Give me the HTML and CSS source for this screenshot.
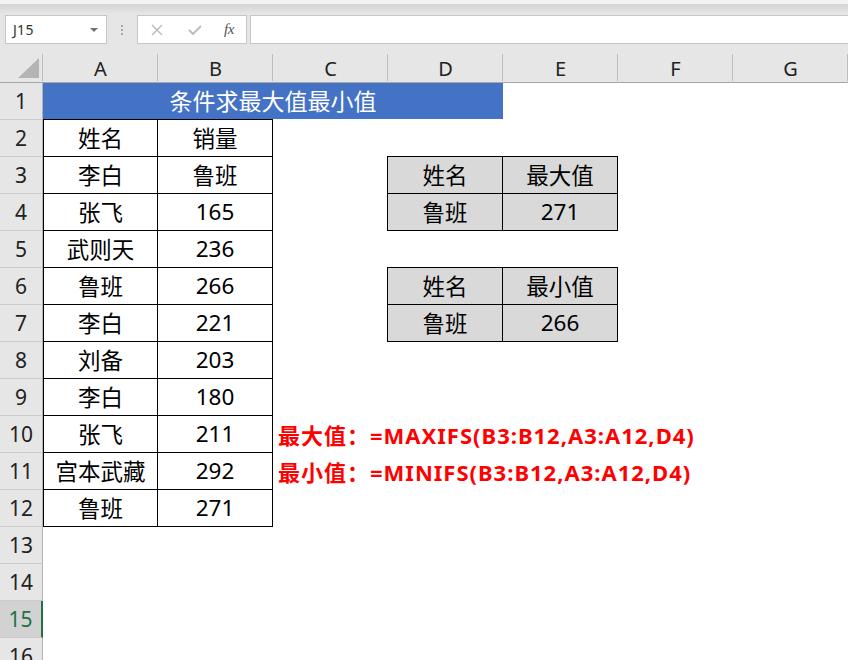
FILE: index.html
```html
<!DOCTYPE html>
<html lang="zh">
<head>
<meta charset="utf-8">
<title>条件求最大值最小值</title>
<link rel="stylesheet" href="styles.css">
</head>
<body>
<div class="topstrip"></div>
<div class="fbar">
  <div class="namebox"><span class="nbtext">J15</span><svg class="dd" width="8" height="5" viewBox="0 0 8 5"><polygon points="0,0 8,0 4,4" fill="#707070"/></svg></div>
  <div class="grip"><i></i><i></i><i></i></div>
  <div class="fbtns">
    <svg width="12" height="12" viewBox="0 0 12 12"><path d="M1 1 L11 11 M11 1 L1 11" stroke="#b9b9b9" stroke-width="1.4" fill="none"/></svg>
    <svg width="14" height="10" viewBox="0 0 14 10"><path d="M1 5 L5 9 L13 1" stroke="#b9b9b9" stroke-width="1.8" fill="none"/></svg>
    <span class="fx">fx</span>
  </div>
  <div class="finput"></div>
</div>
<div class="sheet">
  <div class="corner"><svg width="43" height="38" viewBox="0 0 43 38"><polygon points="18,34 39,34 39,14" fill="#b4b4b4"/></svg></div>
  <div class="ch">A</div><div class="ch">B</div><div class="ch">C</div><div class="ch">D</div><div class="ch">E</div><div class="ch">F</div><div class="ch">G</div>

  <div class="rh">1</div><div class="c title">条件求最大值最小值</div><div class="c"></div><div class="c"></div><div class="c"></div>
  <div class="rh">2</div><div class="c t ta tt">姓名</div><div class="c t tt">销量</div><div class="c"></div><div class="c"></div><div class="c"></div><div class="c"></div><div class="c"></div>
  <div class="rh">3</div><div class="c t ta">李白</div><div class="c t">鲁班</div><div class="c"></div><div class="c t g tlt">姓名</div><div class="c t g tt">最大值</div><div class="c"></div><div class="c"></div>
  <div class="rh">4</div><div class="c t ta">张飞</div><div class="c t">165</div><div class="c"></div><div class="c t g tl">鲁班</div><div class="c t g">271</div><div class="c"></div><div class="c"></div>
  <div class="rh">5</div><div class="c t ta">武则天</div><div class="c t">236</div><div class="c"></div><div class="c"></div><div class="c"></div><div class="c"></div><div class="c"></div>
  <div class="rh">6</div><div class="c t ta">鲁班</div><div class="c t">266</div><div class="c"></div><div class="c t g tlt">姓名</div><div class="c t g tt">最小值</div><div class="c"></div><div class="c"></div>
  <div class="rh">7</div><div class="c t ta">李白</div><div class="c t">221</div><div class="c"></div><div class="c t g tl">鲁班</div><div class="c t g">266</div><div class="c"></div><div class="c"></div>
  <div class="rh">8</div><div class="c t ta">刘备</div><div class="c t">203</div><div class="c"></div><div class="c"></div><div class="c"></div><div class="c"></div><div class="c"></div>
  <div class="rh">9</div><div class="c t ta">李白</div><div class="c t">180</div><div class="c"></div><div class="c"></div><div class="c"></div><div class="c"></div><div class="c"></div>
  <div class="rh">10</div><div class="c t ta">张飞</div><div class="c t">211</div><div class="c red">最大值：=MAXIFS(B3:B12,A3:A12,D4)</div>
  <div class="rh">11</div><div class="c t ta">宫本武藏</div><div class="c t">292</div><div class="c red">最小值：=MINIFS(B3:B12,A3:A12,D4)</div>
  <div class="rh">12</div><div class="c t ta">鲁班</div><div class="c t">271</div><div class="c"></div><div class="c"></div><div class="c"></div><div class="c"></div><div class="c"></div>
  <div class="rh">13</div><div class="c"></div><div class="c"></div><div class="c"></div><div class="c"></div><div class="c"></div><div class="c"></div><div class="c"></div>
  <div class="rh">14</div><div class="c"></div><div class="c"></div><div class="c"></div><div class="c"></div><div class="c"></div><div class="c"></div><div class="c"></div>
  <div class="rh sel">15</div><div class="c"></div><div class="c"></div><div class="c"></div><div class="c"></div><div class="c"></div><div class="c"></div><div class="c"></div>
  <div class="rh">16</div><div class="c"></div><div class="c"></div><div class="c"></div><div class="c"></div><div class="c"></div><div class="c"></div><div class="c"></div>
</div>
</body>
</html>
```
FILE: styles.css
```css
html, body {
  margin: 0;
  padding: 0;
}
body {
  width: 848px;
  height: 660px;
  overflow: hidden;
  background: #ffffff;
  font-family: "Noto Sans", "Noto Sans CJK SC", sans-serif;
  color: #000;
}
.topstrip {
  height: 4px;
  background: #f3f3f3;
}
.fbar {
  height: 40px;
  box-sizing: border-box;
  padding-top: 11px;
  background: linear-gradient(#d3d3d3, #e6e6e6 10px);
  display: flex;
  align-items: flex-start;
}
.namebox {
  margin-left: 5px;
  width: 102px;
  height: 29px;
  box-sizing: border-box;
  border: 1px solid #c6c6c6;
  background: #fff;
  display: flex;
  align-items: center;
  justify-content: space-between;
  padding: 0 8px 0 7px;
}
.nbtext {
  font-size: 14px;
  color: #333;
  letter-spacing: 0.3px;
}
.dd {
  display: block;
  margin-top: 1px;
}
.grip {
  width: 30px;
  height: 29px;
  display: flex;
  flex-direction: column;
  align-items: center;
  justify-content: center;
  gap: 2px;
}
.grip i {
  display: block;
  width: 2px;
  height: 2px;
  background: #a8a8a8;
}
.fbtns {
  width: 110px;
  height: 29px;
  box-sizing: border-box;
  border: 1px solid #c6c6c6;
  background: #fff;
  display: flex;
  align-items: center;
  padding-left: 12px;
  gap: 0;
}
.fbtns svg {
  display: block;
}
.fbtns svg:first-child {
  margin-left: 1px;
}
.fbtns svg:nth-child(2) {
  margin-left: 25px;
  margin-top: 1px;
}
.fx {
  margin-left: 22px;
  font-family: "Liberation Serif", serif;
  font-style: italic;
  font-size: 15px;
  color: #555;
  letter-spacing: -0.5px;
}
.finput {
  margin-left: 3px;
  flex: 1;
  height: 29px;
  box-sizing: border-box;
  border: 1px solid #c6c6c6;
  border-right: none;
  background: #fff;
}
.sheet {
  display: grid;
  grid-template-columns: 43px repeat(7, 115px);
  grid-template-rows: 39px repeat(16, 37px);
}
.corner, .ch {
  box-sizing: border-box;
  background: linear-gradient(#bdbdbd, #bdbdbd) right 0 bottom 1px / 1px 27px no-repeat, #e6e6e6;
  border-bottom: 1px solid #a6a6a6;
}
.corner svg {
  display: block;
}
.ch {
  padding-top: 12px;
  line-height: 26px;
  text-align: center;
  font-size: 20px;
  color: #222;
}
.rh {
  box-sizing: border-box;
  background: #e6e6e6;
  border-right: 1px solid #b4b4b4;
  border-bottom: 1px solid #cbcbcb;
  display: flex;
  align-items: center;
  justify-content: center;
  font-size: 21px;
  color: #222;
}
.rh.sel {
  background: #d2d2d2;
  color: #217346;
  border-right: 2px solid #217346;
}
.c {
  box-sizing: border-box;
  display: flex;
  align-items: center;
  justify-content: center;
  font-size: 22.5px;
  white-space: nowrap;
  padding-bottom: 2px;
}
.title {
  grid-column: span 4;
  background: #4472c4;
  color: #fff;
  border-bottom: 1px solid #fff;
  font-size: 23px;
}
.t {
  border-right: 1px solid #000;
  border-bottom: 1px solid #000;
}
.ta {
  border-left: 1px solid #000;
}
.tt {
  box-shadow: 0 -1px 0 #000;
}
.tl {
  box-shadow: -1px 0 0 #000;
}
.tlt {
  box-shadow: -1px 0 0 #000, 0 -1px 0 #000, -1px -1px 0 #000;
}
.g {
  background: #d9d9d9;
}
.red {
  grid-column: span 5;
  justify-content: flex-start;
  padding-left: 5px;
  color: #ff0000;
  font-weight: bold;
  font-size: 22px;
  letter-spacing: 1px;
}
```
